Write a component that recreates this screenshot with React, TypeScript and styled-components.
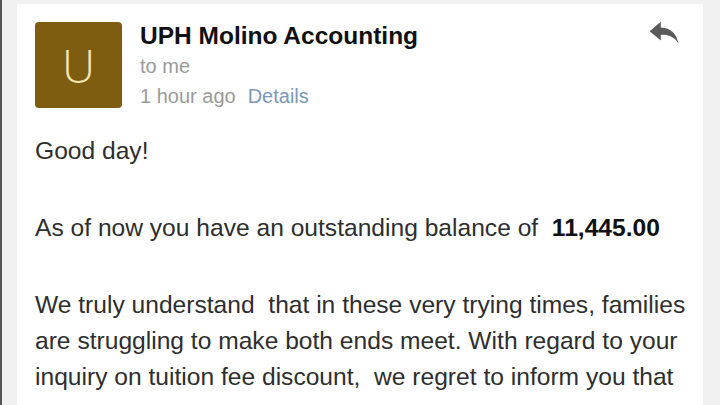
import React from "react";
import styled, {createGlobalStyle} from "styled-components";

const GlobalStyle = createGlobalStyle`
  html, body {
    margin: 0;
    padding: 0;
    width: 720px;
    height: 405px;
    overflow: hidden;
    background: #f2f2f2;
    font-family: "Liberation Sans", Arial, sans-serif;
  }
`;

const Screen = styled.div`
  width: 720px;
  height: 405px;
  box-sizing: border-box;
  border-left: 2px solid #555;
  padding: 4px 17px 0 15px;
  background: #f1f1f1;
  overflow: hidden;
`;

const Card = styled.div`
  background: #fff;
  height: 100%;
  padding: 18px 0 0 18px;
  box-sizing: border-box;
  color: #2e2e2e;
`;

const Header = styled.div`
  display: flex;
  align-items: flex-start;
`;

const Avatar = styled.div`
  width: 87px;
  height: 86px;
  border-radius: 4px;
  background: #7e5d10;
  color: #f6e7b2;
  display: flex;
  align-items: center;
  justify-content: center;
  font-family: "Open Sans", "Liberation Sans", sans-serif;
  font-size: 46px;
  font-weight: 300;
  flex-shrink: 0;
`;

const Meta = styled.div`
  display: flex;
  flex-direction: column;
  margin-left: 18px;
  flex: 1;
`;

const Sender = styled.div`
  font-size: 24.5px;
  font-weight: bold;
  color: #111;
  line-height: 30px;
  margin-top: -1px;
`;

const Sub = styled.div`
  font-size: 20px;
  color: #9a9a9a;
  line-height: 30px;
`;

const Link = styled.span`
  color: #7d97b8;
  margin-left: 12px;
`;

const Reply = styled.div`
  width: 33px;
  margin-right: 22px;
  margin-top: -2px;
  color: #5a5a5a;
`;

const Body = styled.div`
  padding-top: 22px;
  font-size: 24.6px;
  line-height: 36px;
  white-space: pre;
`;

const Para = styled.p<{gap: number}>`
  margin: 0 0 ${p => p.gap}px 0;
`;

const Amount = styled.b`
  color: #111;
`;

export default function App() {
    return (
        <>
            <GlobalStyle/>
            <Screen>
                <Card>
                    <Header>
                        <Avatar>U</Avatar>
                        <Meta>
                            <Sender>UPH Molino Accounting</Sender>
                            <Sub>to me</Sub>
                            <Sub>1 hour ago<Link>Details</Link></Sub>
                        </Meta>
                        <Reply>
                            <svg width="33" height="26" viewBox="0 0 34 28">
                                <path d="M13 2 L1 12 L13 22 L13 16 C21 15.5 27 18 32 25 C30 15 24 8.5 13 8 Z"
                                      fill="currentColor"/>
                            </svg>
                        </Reply>
                    </Header>
                    <Body>
                        <Para gap={41}>Good day!</Para>
                        <Para gap={41}>As of now you have an outstanding balance of  <Amount>11,445.00</Amount></Para>
                        <Para gap={0}>
                            We truly understand  that in these very trying times, families<br/>
                            are struggling to make both ends meet. With regard to your<br/>
                            inquiry on tuition fee discount,  we regret to inform you that
                        </Para>
                    </Body>
                </Card>
            </Screen>
        </>
    );
}
